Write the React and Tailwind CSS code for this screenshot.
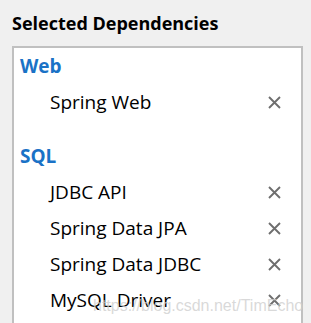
import React from "react";

function XIcon() {
  return (
    <svg width="13" height="13" viewBox="0 0 13 13" className="block">
      <path d="M1 1 L12 12 M12 1 L1 12" stroke="#6e6e6e" strokeWidth="1.9" strokeLinecap="butt" fill="none" />
    </svg>
  );
}

function Item({ label }) {
  return (
    <div className="flex h-[36px] items-center justify-between pl-[36px] pr-[20px]">
      <span className="leading-[36px] text-[19px] text-black">{label}</span>
      <XIcon />
    </div>
  );
}

function Group({ title, items }) {
  return (
    <div>
      <div className="h-[36px] pl-[6px] text-[19px] font-bold leading-[36px] text-[#1a72c6]">{title}</div>
      {items.map((i) => (
        <Item key={i} label={i} />
      ))}
    </div>
  );
}

export default function App() {
  return (
    <div
      className="relative h-[323px] w-[311px] overflow-hidden bg-[#f0f0f0]"
      style={{ fontFamily: '"Open Sans", "Noto Sans", sans-serif' }}
    >
      <div className="h-[46px] pl-[12px] pt-[11px] text-[18px] font-bold leading-[24px] text-black">
        Selected Dependencies
      </div>
      <div className="ml-[12px] mr-[8px] h-[277px] border-2 border-b-0 border-[#c0c0c0] bg-white">
        <div className="flex flex-col gap-[18px]">
          <Group title="Web" items={["Spring Web"]} />
          <Group title="SQL" items={["JDBC API", "Spring Data JPA", "Spring Data JDBC", "MySQL Driver"]} />
        </div>
      </div>
      <div
        className="pointer-events-none absolute left-[93px] top-[298px] whitespace-nowrap text-[16px] leading-[16px] text-[#cfcfcf]/80"
        style={{ fontFamily: '"Liberation Sans", Arial, sans-serif' }}
      >
        https://blog.csdn.net/TimEcho
      </div>
    </div>
  );
}
